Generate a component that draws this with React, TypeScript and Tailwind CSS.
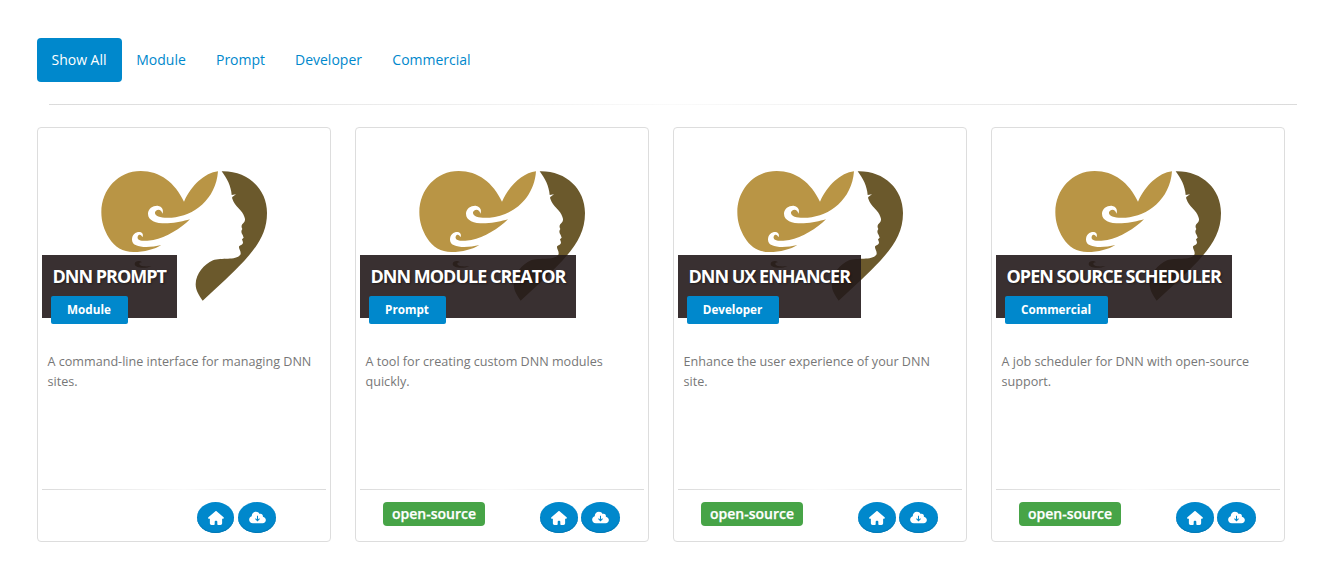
const tabs = ['Show All', 'Module', 'Prompt', 'Developer', 'Commercial'];

const cards = [
  { title: 'DNN PROMPT', tag: 'Module', text: 'A command-line interface for managing DNN sites.', open: false, bar: 'w-[135px]', tagW: 'w-[77px]' },
  { title: 'DNN MODULE CREATOR', tag: 'Prompt', text: 'A tool for creating custom DNN modules quickly.', open: true, bar: 'w-[216px]', tagW: 'w-[77px]' },
  { title: 'DNN UX ENHANCER', tag: 'Developer', text: 'Enhance the user experience of your DNN site.', open: true, bar: 'w-[183px]', tagW: 'w-[92px]' },
  { title: 'OPEN SOURCE SCHEDULER', tag: 'Commercial', text: 'A job scheduler for DNN with open-source support.', open: true, bar: 'w-[236px]', tagW: 'w-[103px]' },
];

const tabWidths = ['w-[85px] pr-px', 'w-[79px] pr-px', 'w-[79px]', 'w-[97px]', 'w-[109px]'];

function Logo() {
  return (
    <svg viewBox="0 0 570 450" className="ml-12 mt-7 h-[150px] w-[190px]" aria-hidden="true">
      <path
        fill="#b99545"
        d="M282 125C255 68 210 33 152 33C85 33 34 88 34 157C34 184 42 210 57 234C74 262 99 276 130 276C164 276 194 268 214 255C177 264 126 265 126 239C126 223 138 215 150 216C158 218 161 225 157 232C155 223 145 222 143 230C139 245 170 244 190 240C229 232 272 206 300 178C280 183 260 189 233 190C200 191 174 183 174 161C174 145 190 136 203 137C217 139 222 151 217 161C215 147 199 145 195 157C193 172 220 175 245 173C311 169 378 118 384 34C344 39 305 75 282 125Z"
      />
      <path
        fill="#6b592c"
        d="M395 34C473 32 531 86 531 159C531 216 505 256 463 302C427 341 382 381 338 422C327 407 317 391 317 373C318 340 342 313 369 301C394 291 437 303 451 284C455 276 446 268 447 260C449 255 459 256 459 247L456 238L461 233L458 225C453 218 453 213 457 207C453 200 454 194 461 188C466 183 466 177 463 170C458 150 434 140 427 116C425 112 428 110 430 109L438 103L425 105C423 78 411 55 395 34Z"
      />
      <path fill="#6b592c" d="M185 318C163 329 132 322 134 311C135 302 148 300 157 307C144 306 145 318 161 319C169 320 177 319 185 318Z" />
    </svg>
  );
}

function HomeIcon() {
  return (
    <svg viewBox="0 0 576 512" className="h-[14px] w-4 fill-white" aria-hidden="true">
      <path d="M575.8 255.5c0 18-15 32.1-32 32.1h-32l.7 160.2c.2 35.5-28.5 64.3-64 64.3H368c-18 0-32-14-32-32v-88c0-18-14-32-32-32h-32c-18 0-32 14-32 32v88c0 18-14 32-32 32h-80c-35 0-64-29-64-64V287.6H32c-18 0-32-14-32-32.1 0-9 3-17 10-24L266.4 8c7-7 15-8 22-8s15 2 21 7l255.4 224.5c8 7 12 15 11 24z" />
    </svg>
  );
}

function CloudIcon() {
  return (
    <svg viewBox="0 0 18 14" className="h-[13px] w-[17px]" aria-hidden="true">
      <path fill="white" d="M4 13.2C1.7 13.2 0 11.5 0 9.4C0 7.5 1.2 6.1 2.8 5.6C2.7 2.8 4.8.8 7.3.8C9.1.8 10.5 1.7 11.3 3.1C13.5 2.5 15.2 4.1 14.8 6.1C16.7 6.5 18 7.9 18 9.7C18 11.7 16.5 13.2 14.5 13.2Z" />
      <path fill="none" stroke="#0088cc" strokeWidth="1.1" d="M9 5v5.2M6.8 8.2L9 10.4l2.2-2.2" />
    </svg>
  );
}

export default function App() {
  return (
    <div className="h-[583px] w-[1317px] overflow-hidden bg-white pl-[37px] pt-[38px] font-['Open_Sans',sans-serif]">
      <nav className="flex h-11 text-sm text-[#0088cc]">
        {tabs.map((tab, i) => (
          <a key={tab} className={`flex items-center justify-center rounded ${tabWidths[i]} ${i === 0 ? 'bg-[#0088cc] text-white' : ''}`}>
            {tab}
          </a>
        ))}
      </nav>
      <div className="ml-3 mt-[22px] h-px w-[1248px] bg-linear-to-r from-[#dbdbdb] via-[#fafafa] to-[#dbdbdb]" />
      <main className="mt-[22px] flex gap-6">
        {cards.map((card) => (
          <article key={card.title} className="flex h-[415px] w-[294px] flex-col rounded border border-[#dddddd] px-1 pt-1">
            <div className="relative h-[190px]">
              <Logo />
              <div className={`absolute left-0 top-[123px] h-[63px] bg-[#241a1b]/90 pl-[10.5px] pt-[9px] ${card.bar}`}>
                <h2 className="whitespace-nowrap text-lg font-bold leading-6 tracking-[-1px] text-white [text-shadow:1px_1px_2px_rgba(0,0,0,0.4)]">{card.title}</h2>
                <span className={`absolute left-[9px] top-[41px] flex h-7 items-center justify-center rounded-xs bg-[#0088cc] pr-px text-[11.7px] font-bold text-white ${card.tagW}`}>{card.tag}</span>
              </div>
            </div>
            <p className="mt-[30px] h-[137px] pl-[5.5px] pr-[6px] text-[12.6px] leading-5 text-[#777777]">{card.text}</p>
            <div className="h-px bg-linear-to-r from-[#dbdbdb] via-[#fafafa] to-[#dbdbdb]" />
            <footer className={`flex pt-3 ${card.open ? 'pl-[23px]' : 'pl-[155px]'}`}>
              {card.open && (
                <span className="mr-[55px] flex h-6 w-[102px] items-center justify-center rounded-[4px] bg-[#47a447] text-sm font-semibold text-white [-webkit-text-stroke:0.25px_white]">open-source</span>
              )}
              <div className={`flex ${card.open ? 'gap-[3px]' : 'gap-1'}`}>
                <a className={`flex h-[31px] items-center justify-center rounded-[50%] bg-[#0088cc] shadow-[inset_0_-1px_1px_#0077b3] ${card.open ? 'w-[38px]' : 'w-[37px]'}`}><HomeIcon /></a>
                <a className={`flex h-[31px] items-center justify-center rounded-[50%] bg-[#0088cc] shadow-[inset_0_-1px_1px_#0077b3] ${card.open ? 'w-[39px]' : 'w-[38px]'}`}><CloudIcon /></a>
              </div>
            </footer>
          </article>
        ))}
      </main>
    </div>
  );
}
